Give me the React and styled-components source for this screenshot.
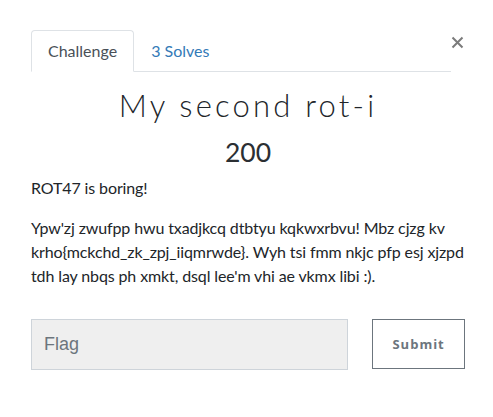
import styled, { createGlobalStyle } from "styled-components";

const GlobalStyle = createGlobalStyle`
  body {
    margin: 0;
    background: #fff;
    font-family: Lato, "Liberation Sans", sans-serif;
    color: #212529;
  }
`;

const tabs = [
  { label: "Challenge", active: true },
  { label: "3 Solves", active: false },
];

const description =
  "Ypw'zj zwufpp hwu txadjkcq dtbtyu kqkwxrbvu! Mbz cjzg kv krho{mckchd_zk_zpj_iiqmrwde}. Wyh tsi fmm nkjc pfp esj xjzpd tdh lay nbqs ph xmkt, dsql lee'm vhi ae vkmx libi :).";

function App() {
  return (
    <>
      <GlobalStyle />
      <Modal>
        <Header>
          <Tabs>
            {tabs.map((t) => (
              <Tab key={t.label} $active={t.active}>
                {t.label}
              </Tab>
            ))}
          </Tabs>
          <Close aria-label="Close">
            <svg width="13" height="13" viewBox="0 0 13 13">
              <path d="M1.5 1.5 L11.5 11.5 M11.5 1.5 L1.5 11.5" stroke="#7b7b7b" strokeWidth="2" />
            </svg>
          </Close>
        </Header>
        <Title>My second rot-i</Title>
        <Points>200</Points>
        <Text>ROT47 is boring!</Text>
        <Text>{description}</Text>
        <SubmitRow>
          <FlagInput placeholder="Flag" />
          <SubmitButton>Submit</SubmitButton>
        </SubmitRow>
      </Modal>
    </>
  );
}

const Modal = styled.div`
  padding: 30px 28px 0 31px;
  width: 493px;
  box-sizing: border-box;
`;

// tab header
const Header = styled.div`
  display: flex;
  align-items: flex-start;
`;
const Tabs = styled.div`
  display: flex;
  width: 420px;
  height: 41px;
  border-bottom: 1px solid #dee2e6;
`;
const Tab = styled.div`
  height: 42px;
  box-sizing: border-box;
  padding: 8px 16px 0;
  font-size: 16px;
  line-height: 24px;
  border: 1px solid ${(p) => (p.$active ? "#dee2e6" : "transparent")};
  border-bottom-color: ${(p) => (p.$active ? "#fff" : "transparent")};
  border-radius: 4px 4px 0 0;
  background: ${(p) => (p.$active ? "#fff" : "transparent")};
  color: ${(p) => (p.$active ? "#495057" : "#337ab7")};
`;
const Close = styled.div`
  display: flex;
  margin: 6px 0 0 0;
`;

// body
const Title = styled.h1`
  margin: 13px 0 0;
  text-align: center;
  font-size: 31px;
  line-height: 40px;
  font-weight: 300;
  letter-spacing: 3.2px;
  color: #212529;
`;
const Points = styled.div`
  margin-top: 11px;
  text-align: center;
  font-size: 26.5px;
  line-height: 32px;
  color: #2b2f33;
`;
const Text = styled.p`
  margin: 8px -14px 0 0;
  font-size: 16px;
  line-height: 24px;
  letter-spacing: -0.12px;
  color: #212529;
  & + & {
    margin-top: 16px;
  }
`;
const SubmitRow = styled.div`
  display: flex;
  gap: 24px;
  margin-top: 31px;
`;
const FlagInput = styled.input`
  width: 318px;
  height: 51px;
  box-sizing: border-box;
  padding: 0 12px;
  background: #efefef;
  border: 1px solid #ced4da;
  font-family: "Liberation Sans", sans-serif;
  font-size: 18px;
  outline: none;
  &::placeholder {
    color: #6c757d;
  }
`;
const SubmitButton = styled.button`
  width: 93px;
  height: 50px;
  background: #fff;
  border: 1px solid #6c757d;
  color: #6c757d;
  font-family: "Open Sans", sans-serif;
  font-weight: 700;
  font-size: 13px;
  letter-spacing: 1px;
`;

export default App;
